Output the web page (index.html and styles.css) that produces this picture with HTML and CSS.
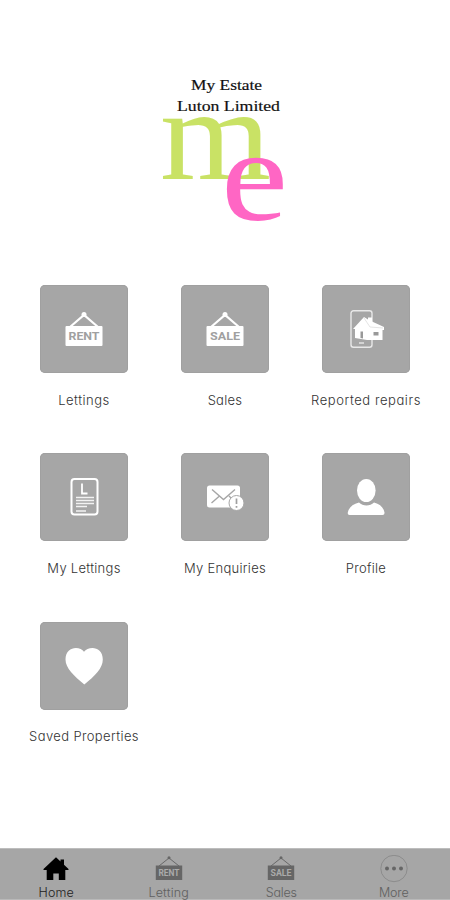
FILE: index.html
```
<!DOCTYPE html>
<html lang="en">
<head>
<meta charset="utf-8">
<title>My Estate Luton Limited</title>
<link rel="stylesheet" href="styles.css">
</head>
<body>
<div class="app">
  <header class="brand">
    <svg class="logo" width="150" height="160" viewBox="150 70 150 160">
      <g class="company">
        <text x="191" y="90" textLength="71" lengthAdjust="spacingAndGlyphs">My Estate</text>
        <text x="177" y="111" textLength="103" lengthAdjust="spacingAndGlyphs">Luton Limited</text>
      </g>
      <text class="letter green" x="160" y="178.500" textLength="111" lengthAdjust="spacingAndGlyphs">m</text>
      <text class="letter pink" x="221" y="219.500" textLength="67" lengthAdjust="spacingAndGlyphs">e</text>
    </svg>
  </header>
  <main class="grid">
    <a class="item"><span class="tile"><svg width="40" height="40" viewBox="0 0 40 40"><path class="line" d="M6 18 20 6 34 18"/><circle cx="20" cy="5.500" r="2.500"/><rect x="1.500" y="17" width="37" height="20" rx="1"/><text class="sign" x="4.500" y="31.200" textLength="31" lengthAdjust="spacingAndGlyphs">RENT</text></svg></span><span class="label l-lettings">Lettings</span></a>
    <a class="item"><span class="tile"><svg width="40" height="40" viewBox="0 0 40 40"><path class="line" d="M6 18 20 6 34 18"/><circle cx="20" cy="5.500" r="2.500"/><rect x="1.500" y="17" width="37" height="20" rx="1"/><text class="sign" x="5" y="31.200" textLength="30" lengthAdjust="spacingAndGlyphs">SALE</text></svg></span><span class="label l-sales">Sales</span></a>
    <a class="item"><span class="tile"><svg width="40" height="40" viewBox="0 0 40 40"><rect class="phone" x="5" y="1.800" width="21" height="36.400" rx="2.500"/><path class="phone" d="M13 34h5"/><path d="M7 20 18 8l4 2.500V8.500h4v4l12 5.500v3h-1.500v10L21 31l-12-2V20Z"/><path class="cut" d="M14.500 22.500h2.500v7l-2.500-.5ZM27.500 23h5v3.500h-5Z"/><path class="seam" d="m18 9 6 9 13 1"/></svg></span><span class="label l-repairs">Reported repairs</span></a>
    <a class="item"><span class="tile"><svg width="40" height="40" viewBox="0 0 40 40"><rect class="doc" x="7.500" y="2" width="26" height="35.500" rx="3"/><path class="doc-l" d="M18 6.500v10h5.500"/><path class="rows" d="M12 20.500h18M12 23.500h18M12 26.500h18M12 29.500h11M12 34h10"/></svg></span><span class="label">My Lettings</span></a>
    <a class="item"><span class="tile"><svg width="40" height="40" viewBox="0 0 40 40"><rect x="2" y="8.500" width="33" height="22" rx="2.500"/><path class="mail" d="m7 12.500 11.500 10L30 12.500M6.500 26l8-7M24 19l3 3"/><circle class="alert" cx="31.500" cy="26" r="7.500"/><path class="mark" d="M31.500 21.500v5.500M31.500 29v1.800"/></svg></span><span class="label">My Enquiries</span></a>
    <a class="item"><span class="tile"><svg width="40" height="40" viewBox="0 0 40 40"><ellipse cx="20.300" cy="13.500" rx="9.300" ry="11.500"/><path d="M13 25.500c4 4 11 4 15 0 6 1.500 9.500 5 10.500 10q.3 2.500-2 2.500h-33q-2.200 0-1.700-2.500c1-5 5-8.500 11.200-10Z"/></svg></span><span class="label">Profile</span></a>
    <a class="item"><span class="tile"><svg width="40" height="40" viewBox="0 0 40 40"><path d="M20 5.800C16.500 0 1.500-.5 1.500 13.500 1.500 22 10 30 20.300 38.500 31 30 38.800 22 38.800 13.500 38.800-.5 24 0 20 5.800Z"/></svg></span><span class="label l-saved">Saved Properties</span></a>
  </main>
  <nav class="bar">
    <a class="tab active"><svg width="28" height="28" viewBox="0 0 28 28"><path d="M14 2.300 18.500 6.500V4.500h3.500v5.200L26.500 14v1h-3.200v10h-6.500v-6.500h-5.500V25H4.700V15H1.500v-1Z"/></svg><span class="tab-label">Home</span></a>
    <a class="tab"><svg width="28" height="28" viewBox="0 0 28 28"><path class="thin" d="M4 11 14 3l10 8"/><circle cx="14" cy="2.800" r="1.500"/><rect x=".8" y="10.500" width="26.400" height="14.500"/><text class="mini" x="3.500" y="21.300" textLength="21" lengthAdjust="spacingAndGlyphs">RENT</text></svg><span class="tab-label">Letting</span></a>
    <a class="tab"><svg width="28" height="28" viewBox="0 0 28 28"><path class="thin" d="M4 11 14 3l10 8"/><circle cx="14" cy="2.800" r="1.500"/><rect x=".8" y="10.500" width="26.400" height="14.500"/><text class="mini" x="3.500" y="21.300" textLength="21" lengthAdjust="spacingAndGlyphs">SALE</text></svg><span class="tab-label narrow">Sales</span></a>
    <a class="tab"><svg width="28" height="28" viewBox="0 0 28 28"><circle class="ring" cx="14" cy="13.500" r="13.200"/><circle cx="7" cy="13.500" r="2"/><circle cx="14" cy="13.500" r="2"/><circle cx="21" cy="13.500" r="2"/></svg><span class="tab-label narrow">More</span></a>
  </nav>
</div>
</body>
</html>
```
FILE: styles.css
```
* { box-sizing: border-box; }
body { margin: 0; background: #fff; font-family: Inter, "Liberation Sans", sans-serif; font-feature-settings: "cv11"; }
.app { height: 900px; display: flex; flex-direction: column; overflow: hidden; }
.brand { height: 285px; padding: 70px 0 0 150px; flex: none; }
.logo { display: block; overflow: visible; }
.company { font: 15.5px "Liberation Serif", serif; fill: #111; stroke: #111; stroke-width: .2px; }
.letter { font-family: "Liberation Serif", serif; }
.green { font-size: 132px; fill: #c9e265; }
.pink { font-size: 132px; fill: #ff66c4; }
.grid { display: grid; grid-template-columns: repeat(3, 141px); grid-auto-rows: 168.3px; justify-content: center; flex: 1; }
.item { display: flex; flex-direction: column; align-items: center; gap: 16.5px; }
.tile { width: 88px; height: 88px; border-radius: 5px; background: #a6a6a6; display: flex; align-items: center; justify-content: center; box-shadow: inset 0 0 0 1px #a0a0a0; }
.tile svg { fill: #fff; }
.line { fill: none; stroke: #fff; stroke-width: 2.2; }
.sign { font: bold 11.8px Roboto, sans-serif; fill: #a0a0a0; }
.phone { fill: none; stroke: #e8e8e8; stroke-width: 1.4; }
.cut { fill: #999; }
.seam { fill: none; stroke: #ddd; stroke-width: .8; }
.doc { fill: none; stroke: #fff; stroke-width: 2; }
.doc-l { fill: none; stroke: #fff; stroke-width: 1.8; }
.rows { fill: none; stroke: #f2f2f2; stroke-width: 1.5; }
.mail { fill: none; stroke: #a6a6a6; stroke-width: 1.4; }
.alert { stroke: #a6a6a6; stroke-width: 1; }
.mark { fill: none; stroke: #a0a0a0; stroke-width: 1.7; }
.label { font-size: 13px; line-height: 20px; font-weight: 300; color: #333; white-space: nowrap; letter-spacing: .28px; }
.l-lettings { letter-spacing: .5px; }
.l-repairs { letter-spacing: .56px; }
.l-saved { letter-spacing: .38px; }
.bar { height: 52px; flex: none; display: grid; grid-template-columns: repeat(4, 1fr); background: #a6a6a6; border-top: 1px solid #bdbdbd; border-bottom: 1px solid #b9b9b9; }
.tab { display: flex; flex-direction: column; align-items: center; padding-top: 6px; color: #606060; fill: #666; }
.tab svg { display: block; flex: none; }
.tab-label { font-size: 12.5px; line-height: 19px; font-weight: 300; letter-spacing: .2px; }
.narrow { letter-spacing: -.2px; }
.active { color: #222; fill: #000; }
.thin { fill: none; stroke: #686868; stroke-width: 1; }
.mini { font: bold 9px Roboto, sans-serif; fill: #aaa; }
.ring { fill: none; stroke: #858585; stroke-width: .8; }
```
